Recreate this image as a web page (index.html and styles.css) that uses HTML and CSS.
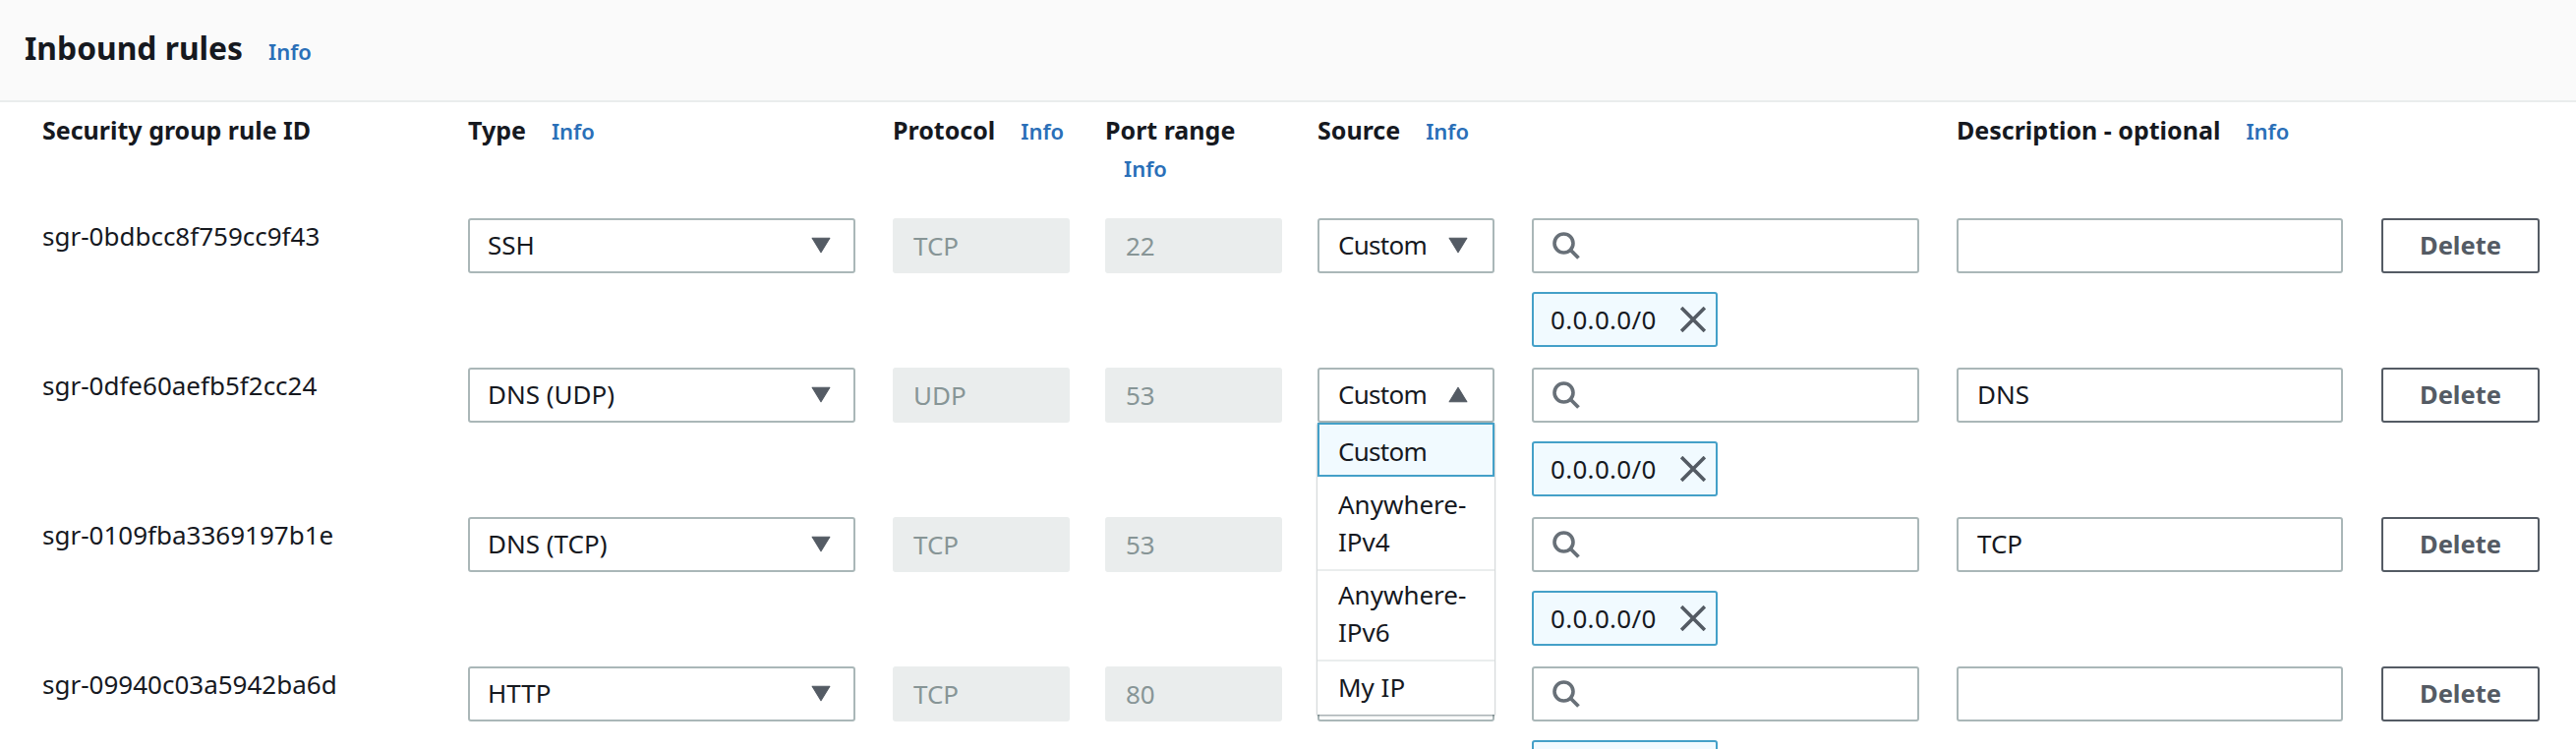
FILE: index.html
```html
<!DOCTYPE html>
<html lang="en">
<head>
<meta charset="utf-8">
<title>Inbound rules</title>
<link rel="stylesheet" href="styles.css">
</head>
<body>
<svg class="defs" width="0" height="0" aria-hidden="true">
  <symbol id="search" viewBox="0 0 28 28"><circle cx="11.5" cy="11.5" r="9.5" fill="none" stroke="currentColor" stroke-width="3.6"/><path d="M18 18 26.5 26.5" fill="none" stroke="currentColor" stroke-width="3.8"/></symbol>
  <symbol id="close" viewBox="0 0 24 24"><path d="M1 1 23 23M23 1 1 23" fill="none" stroke="currentColor" stroke-width="3.4"/></symbol>
  <symbol id="down" viewBox="0 0 18 15"><path d="M1 1H17L9 14Z" fill="currentColor" stroke="currentColor" stroke-linejoin="round"/></symbol>
  <symbol id="up" viewBox="0 0 18 15"><path d="M1 14H17L9 1Z" fill="currentColor" stroke="currentColor" stroke-linejoin="round"/></symbol>
</svg>
<section class="panel">
  <header class="panel-head"><h2 class="panel-title">Inbound rules</h2><a class="info">Info</a></header>
  <div class="grid head-row">
    <div class="th">Security group rule ID</div>
    <div class="th">Type<a class="info">Info</a></div>
    <div class="th">Protocol<a class="info">Info</a></div>
    <div class="th th-wrap">Port range<a class="info">Info</a></div>
    <div class="th">Source<a class="info">Info</a></div>
    <div></div>
    <div class="th">Description - optional<a class="info">Info</a></div>
    <div></div>
  </div>

  <div class="grid rule">
    <div class="rule-id">sgr-0bdbcc8f759cc9f43</div>
    <div class="field select wide"><span>SSH</span><svg class="caret"><use href="#down"/></svg></div>
    <div class="field disabled">TCP</div>
    <div class="field disabled">22</div>
    <div class="field select source"><span class="custom">Custom</span><svg class="caret"><use href="#down"/></svg></div>
    <div class="stack wide">
      <div class="field search"><svg class="search-icon"><use href="#search"/></svg></div>
      <div class="chip"><span>0.0.0.0/0</span><svg class="close-icon"><use href="#close"/></svg></div>
    </div>
    <div class="field desc"></div>
    <button class="delete">Delete</button>
  </div>

  <div class="grid rule">
    <div class="rule-id">sgr-0dfe60aefb5f2cc24</div>
    <div class="field select wide"><span>DNS (UDP)</span><svg class="caret"><use href="#down"/></svg></div>
    <div class="field disabled">UDP</div>
    <div class="field disabled">53</div>
    <div class="source-open">
      <div class="field select source"><span class="custom">Custom</span><svg class="caret"><use href="#up"/></svg></div>
      <ul class="menu">
        <li class="opt selected"><span class="custom">Custom</span></li>
        <li class="opt">Anywhere-<br>IPv4</li>
        <li class="opt">Anywhere-<br>IPv6</li>
        <li class="opt">My IP</li>
      </ul>
    </div>
    <div class="stack wide">
      <div class="field search"><svg class="search-icon"><use href="#search"/></svg></div>
      <div class="chip"><span>0.0.0.0/0</span><svg class="close-icon"><use href="#close"/></svg></div>
    </div>
    <div class="field desc">DNS</div>
    <button class="delete">Delete</button>
  </div>

  <div class="grid rule">
    <div class="rule-id">sgr-0109fba3369197b1e</div>
    <div class="field select wide"><span>DNS (TCP)</span><svg class="caret"><use href="#down"/></svg></div>
    <div class="field disabled">TCP</div>
    <div class="field disabled">53</div>
    <div class="field select source"><span class="custom">Custom</span><svg class="caret"><use href="#down"/></svg></div>
    <div class="stack wide">
      <div class="field search"><svg class="search-icon"><use href="#search"/></svg></div>
      <div class="chip"><span>0.0.0.0/0</span><svg class="close-icon"><use href="#close"/></svg></div>
    </div>
    <div class="field desc">TCP</div>
    <button class="delete">Delete</button>
  </div>

  <div class="grid rule">
    <div class="rule-id">sgr-09940c03a5942ba6d</div>
    <div class="field select wide"><span>HTTP</span><svg class="caret"><use href="#down"/></svg></div>
    <div class="field disabled">TCP</div>
    <div class="field disabled">80</div>
    <div class="field select source"><span class="custom">Custom</span><svg class="caret"><use href="#down"/></svg></div>
    <div class="stack wide">
      <div class="field search"><svg class="search-icon"><use href="#search"/></svg></div>
      <div class="chip"><span>0.0.0.0/0</span><svg class="close-icon"><use href="#close"/></svg></div>
    </div>
    <div class="field desc"></div>
    <button class="delete">Delete</button>
  </div>
</section>
</body>
</html>
```
FILE: styles.css
```css
* { box-sizing: border-box; }
html, body { margin: 0; height: 762px; overflow: hidden; background: #fff; }
body { font-family: "Noto Sans", sans-serif; font-size: 26px; line-height: 38px; color: #16191f; }
.defs { position: absolute; }
.panel-head { height: 104px; background: #fafafa; border-bottom: 2px solid #eaeded; padding: 28px 25px 0; display: flex; align-items: flex-start; }
.panel-title { margin: 0; font-size: 31.8px; line-height: 42px; font-weight: 700; }
.info { color: #2a6fb8; font-size: 22px; font-weight: 600; line-height: 38px; margin-left: 26px; }
.panel-head .info { margin-top: 5px; }
.grid { display: grid; grid-template-columns: 397px 396px 180px 180px 182px 396px 396px 161px; column-gap: 36px; padding-left: 43px; }
.head-row { height: 118px; padding-top: 9px; align-content: start; }
.th { font-weight: 700; font-size: 25px; }
.th-wrap .info { display: block; margin-left: 19px; margin-top: 1px; }
.rule { height: 152px; }
.rule-id { margin-top: -1px; }
.field { height: 56px; border: 2px solid #aab7b8; border-radius: 3px; background: #fff; padding: 0 20px 2px 19px; display: flex; align-items: center; justify-content: space-between; }
.wide { margin-right: 2px; }
.desc { margin-right: 3px; }
.disabled { background: #eaeded; border-color: #eaeded; color: #879596; padding-bottom: 0; }
.select { padding-left: 18px; padding-right: 23px; }
.source { width: 180px; padding-left: 19px; padding-right: 25px; }
.custom { letter-spacing: -0.7px; }
.caret { width: 20px; height: 17px; color: #545b64; flex: none; }
.search { justify-content: flex-start; color: #687078; padding-bottom: 0; }
.search-icon { width: 28px; height: 28px; }
.stack { display: flex; flex-direction: column; gap: 19px; }
.chip { width: 189px; height: 56px; border: 2px solid #44a0c8; border-radius: 3px; background: #f1faff; padding: 0 10px 0 17px; display: flex; align-items: center; justify-content: space-between; letter-spacing: 0.3px; }
.close-icon { width: 26px; height: 26px; color: #545b64; }
.delete { height: 56px; border: 2px solid #545b64; border-radius: 3px; background: #fff; color: #545b64; font: 700 25.5px/38px "Noto Sans", sans-serif; padding: 0 0 2px; }
.source-open { position: relative; }
.menu { position: absolute; left: 0; top: 56px; width: 180px; margin: 0; padding: 0; list-style: none; background: #fff; box-shadow: 0 1px 2px rgba(0,28,36,.5); z-index: 2; }
.opt { padding: 5px 20px 9px 21px; border-top: 2px solid #eaeded; }
.opt:last-child { padding-top: 7px; }
.selected { height: 55px; padding: 8px 20px 0 19px; border: 2px solid #44a0c8; background: #f1faff; margin-bottom: 2px; }
.selected + .opt { border-top: 0; padding-top: 7px; }
```
